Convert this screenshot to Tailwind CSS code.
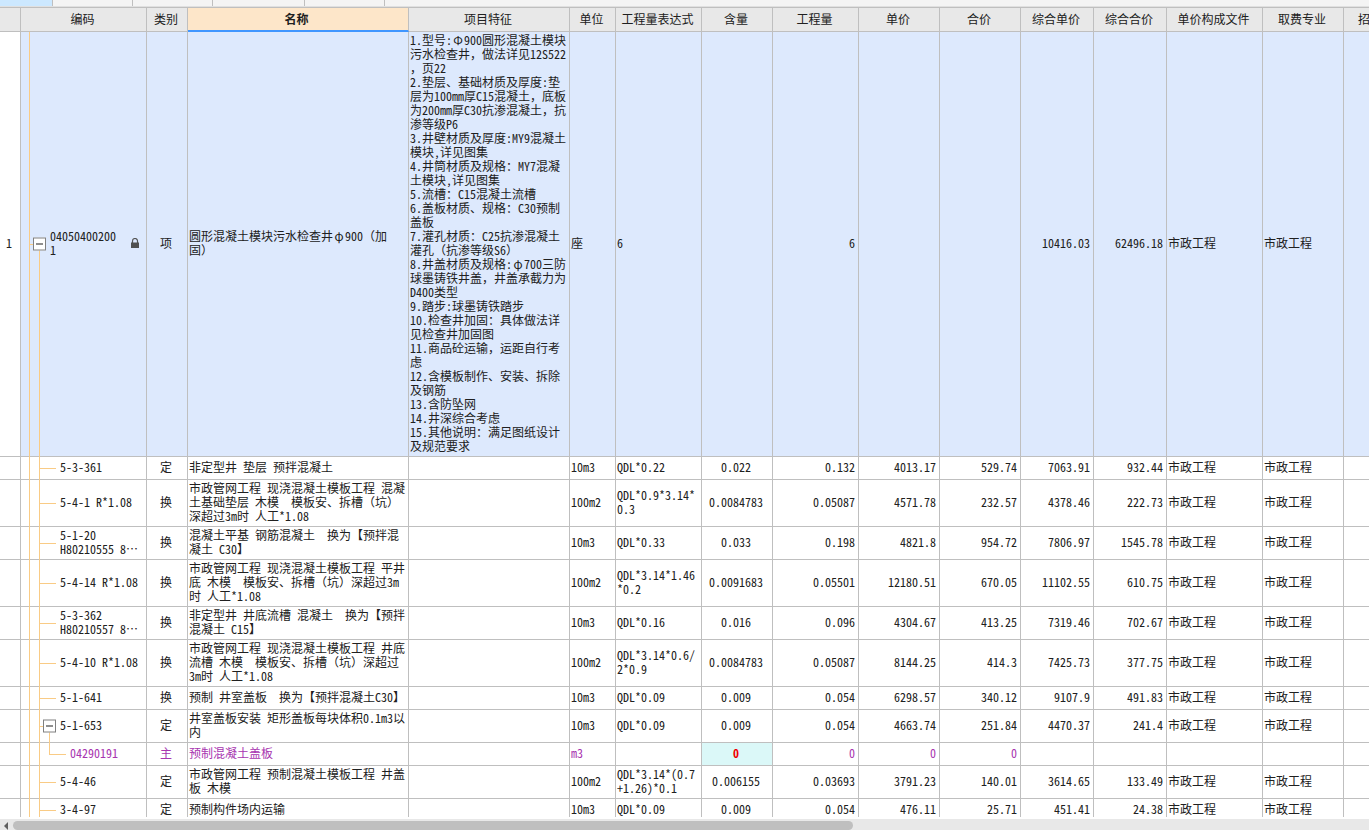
<!DOCTYPE html>
<html lang="zh-CN">
<head>
<meta charset="utf-8">
<title>分部分项工程量清单</title>
<script src="https://cdn.jsdelivr.net/npm/@tailwindcss/browser@4"></script>
</head>
<body class="flex h-screen flex-col overflow-hidden bg-white font-['Noto_Sans_Mono_CJK_SC','Noto_Sans_CJK_SC',sans-serif] text-[12px] leading-[14px] text-[#202020] [text-spacing-trim:space-all]">

<div class="flex h-[7px] shrink-0 border-b border-[#e0e0e0] bg-[#f4f4f4]">
  <div class="w-[53px] border-r border-[#bfbfbf] bg-[#cce8ff]"></div>
  <div class="w-20 border-r border-[#bfbfbf]"></div>
  <div class="w-20 border-r border-[#bfbfbf]"></div>
  <div class="w-[92px] border-r border-[#bfbfbf]"></div>
  <div class="w-20 border-r border-[#bfbfbf]"></div>
</div>

<main class="min-h-0 flex-1 overflow-hidden border-t border-[#bfbfbf]">
<table class="w-full table-fixed border-separate border-spacing-0 whitespace-pre [&_td]:border-r [&_td]:border-b [&_td]:border-[#bfbfbf] [&_td]:pt-0 [&_td]:pr-[3px] [&_td]:pb-[2px] [&_td]:pl-px [&_th]:overflow-hidden [&_th]:border-r [&_th]:border-b [&_th]:border-[#bfbfbf] [&_th]:bg-[#e8e8e8] [&_th]:pr-[2px] [&_th]:pb-[2px] [&_th]:font-normal [&_td:nth-child(1)]:text-center [&_td:nth-child(3)]:text-center [&_td:nth-child(8)]:text-center [&_td:nth-child(9)]:text-right [&_td:nth-child(10)]:text-right [&_td:nth-child(11)]:text-right [&_td:nth-child(12)]:text-right [&_td:nth-child(13)]:text-right">
<colgroup>
<col class="w-[21px]"><col class="w-[126px]"><col class="w-[41px]"><col class="w-[221px]"><col class="w-[161px]"><col class="w-[46px]"><col class="w-[86px]"><col class="w-[71px]"><col class="w-[86px]"><col class="w-[81px]"><col class="w-[81px]"><col class="w-[73px]"><col class="w-[73px]"><col class="w-[96px]"><col class="w-[81px]"><col>
</colgroup>
<thead>
<tr class="h-6"><th></th><th>编码</th><th>类别</th><th class="border-b-2! border-b-[#4096ff]! bg-[#fde6c9]! pr-[3px]! pb-0! font-bold!">名称</th><th>项目特征</th><th>单位</th><th>工程量表达式</th><th>含量</th><th>工程量</th><th>单价</th><th>合价</th><th>综合单价</th><th>综合合价</th><th>单价构成文件</th><th>取费专业</th><th class="border-r-0! pr-0! pl-[14px] text-left">招</th></tr>
</thead>
<tbody class="[&_td:last-child]:border-r-0">
<tr class="h-[425px] bg-[#dde9fd] [&>td:first-child]:bg-white">
<td>1</td>
<td class="relative pl-[29px]!"><span class="absolute inset-y-0 left-2 -bottom-px w-px bg-[#f9cb85]"></span><span class="absolute top-1/2 left-2 h-px w-1 bg-[#f9cb85]"></span><span class="absolute top-1/2 left-[18px] -bottom-px w-px bg-[#f9cb85]"></span><button aria-label="折叠" class="absolute top-1/2 left-3 flex size-[13px] -translate-y-1/2 items-center justify-center border border-[#808080] bg-white"><span class="h-px w-[7px] bg-[#202020]"></span></button><div class="flex items-center justify-between pr-1"><span>04050400200<br>1</span><svg class="h-[10px] w-2" viewBox="0 0 8 10" role="img" aria-label="锁定"><path d="M1.5 5V3a2.5 2.5 0 0 1 5 0v2" fill="none" stroke="#555" stroke-width="1.2"/><path d="M0 4.5h8V10H0z" fill="#505050"/></svg></div></td>
<td>项</td><td>圆形混凝土模块污水检查井<span class="inline-block w-3 text-center">φ</span>900（加<br>固）</td>
<td>1.型号:<span class="inline-block w-3 text-center">Φ</span>900圆形混凝土模块<br>污水检查井，做法详见12S522<br>，页22<br>2.垫层、基础材质及厚度:垫<br>层为100mm厚C15混凝土，底板<br>为200mm厚C30抗渗混凝土，抗<br>渗等级P6<br>3.井壁材质及厚度:MY9混凝土<br>模块,详见图集<br>4.井筒材质及规格：MY7混凝<br>土模块,详见图集<br>5.流槽：C15混凝土流槽<br>6.盖板材质、规格：C30预制<br>盖板<br>7.灌孔材质：C25抗渗混凝土<br>灌孔（抗渗等级S6）<br>8.井盖材质及规格:<span class="inline-block w-3 text-center">φ</span>700三防<br>球墨铸铁井盖，井盖承截力为<br>D400类型<br>9.踏步:球墨铸铁踏步<br>10.检查井加固：具体做法详<br>见检查井加固图<br>11.商品砼运输，运距自行考<br>虑<br>12.含模板制作、安装、拆除<br>及钢筋<br>13.含防坠网<br>14.井深综合考虑<br>15.其他说明：满足图纸设计<br>及规范要求</td>
<td>座</td><td>6</td><td></td><td>6</td><td></td><td></td><td>10416.03</td><td>62496.18</td><td>市政工程</td><td>市政工程</td><td></td></tr>

<tr class="h-[23px]"><td></td><td class="relative pl-[39px]!"><span class="absolute inset-y-0 left-2 -bottom-px w-px bg-[#f9cb85]"></span><span class="absolute inset-y-0 left-[18px] -bottom-px w-px bg-[#f9cb85]"></span><span class="absolute top-1/2 left-[18px] h-px w-[17px] bg-[#f9cb85]"></span>5-3-361</td><td>定</td><td>非定型井 垫层 预拌混凝土</td><td></td><td>10m3</td><td>QDL*0.22</td><td>0.022</td><td>0.132</td><td>4013.17</td><td>529.74</td><td>7063.91</td><td>932.44</td><td>市政工程</td><td>市政工程</td><td></td></tr>

<tr class="h-[47px]"><td></td><td class="relative pl-[39px]!"><span class="absolute inset-y-0 left-2 -bottom-px w-px bg-[#f9cb85]"></span><span class="absolute inset-y-0 left-[18px] -bottom-px w-px bg-[#f9cb85]"></span><span class="absolute top-1/2 left-[18px] h-px w-[17px] bg-[#f9cb85]"></span>5-4-1 R*1.08</td><td>换</td><td>市政管网工程 现浇混凝土模板工程 混凝<br>土基础垫层 木模  模板安、拆槽（坑）<br>深超过3m时 人工*1.08</td><td></td><td>100m2</td><td>QDL*0.9*3.14*<br>0.3</td><td>0.0084783</td><td>0.05087</td><td>4571.78</td><td>232.57</td><td>4378.46</td><td>222.73</td><td>市政工程</td><td>市政工程</td><td></td></tr>

<tr class="h-[33px]"><td></td><td class="relative pl-[39px]!"><span class="absolute inset-y-0 left-2 -bottom-px w-px bg-[#f9cb85]"></span><span class="absolute inset-y-0 left-[18px] -bottom-px w-px bg-[#f9cb85]"></span><span class="absolute top-1/2 left-[18px] h-px w-[17px] bg-[#f9cb85]"></span>5-1-20<br>H80210555 8…</td><td>换</td><td>混凝土平基 钢筋混凝土  换为【预拌混<br>凝土 C30】</td><td></td><td>10m3</td><td>QDL*0.33</td><td>0.033</td><td>0.198</td><td>4821.8</td><td>954.72</td><td>7806.97</td><td>1545.78</td><td>市政工程</td><td>市政工程</td><td></td></tr>

<tr class="h-[47px]"><td></td><td class="relative pl-[39px]!"><span class="absolute inset-y-0 left-2 -bottom-px w-px bg-[#f9cb85]"></span><span class="absolute inset-y-0 left-[18px] -bottom-px w-px bg-[#f9cb85]"></span><span class="absolute top-1/2 left-[18px] h-px w-[17px] bg-[#f9cb85]"></span>5-4-14 R*1.08</td><td>换</td><td>市政管网工程 现浇混凝土模板工程 平井<br>底 木模  模板安、拆槽（坑）深超过3m<br>时 人工*1.08</td><td></td><td>100m2</td><td>QDL*3.14*1.46<br>*0.2</td><td>0.0091683</td><td>0.05501</td><td>12180.51</td><td>670.05</td><td>11102.55</td><td>610.75</td><td>市政工程</td><td>市政工程</td><td></td></tr>

<tr class="h-[33px]"><td></td><td class="relative pl-[39px]!"><span class="absolute inset-y-0 left-2 -bottom-px w-px bg-[#f9cb85]"></span><span class="absolute inset-y-0 left-[18px] -bottom-px w-px bg-[#f9cb85]"></span><span class="absolute top-1/2 left-[18px] h-px w-[17px] bg-[#f9cb85]"></span>5-3-362<br>H80210557 8…</td><td>换</td><td>非定型井 井底流槽 混凝土  换为【预拌<br>混凝土 C15】</td><td></td><td>10m3</td><td>QDL*0.16</td><td>0.016</td><td>0.096</td><td>4304.67</td><td>413.25</td><td>7319.46</td><td>702.67</td><td>市政工程</td><td>市政工程</td><td></td></tr>

<tr class="h-[47px]"><td></td><td class="relative pl-[39px]!"><span class="absolute inset-y-0 left-2 -bottom-px w-px bg-[#f9cb85]"></span><span class="absolute inset-y-0 left-[18px] -bottom-px w-px bg-[#f9cb85]"></span><span class="absolute top-1/2 left-[18px] h-px w-[17px] bg-[#f9cb85]"></span>5-4-10 R*1.08</td><td>换</td><td>市政管网工程 现浇混凝土模板工程 井底<br>流槽 木模  模板安、拆槽（坑）深超过<br>3m时 人工*1.08</td><td></td><td>100m2</td><td>QDL*3.14*0.6/<br>2*0.9</td><td>0.0084783</td><td>0.05087</td><td>8144.25</td><td>414.3</td><td>7425.73</td><td>377.75</td><td>市政工程</td><td>市政工程</td><td></td></tr>

<tr class="h-[23px]"><td></td><td class="relative pl-[39px]!"><span class="absolute inset-y-0 left-2 -bottom-px w-px bg-[#f9cb85]"></span><span class="absolute inset-y-0 left-[18px] -bottom-px w-px bg-[#f9cb85]"></span><span class="absolute top-1/2 left-[18px] h-px w-[17px] bg-[#f9cb85]"></span>5-1-641</td><td>换</td><td>预制 井室盖板  换为【预拌混凝土C30】</td><td></td><td>10m3</td><td>QDL*0.09</td><td>0.009</td><td>0.054</td><td>6298.57</td><td>340.12</td><td>9107.9</td><td>491.83</td><td>市政工程</td><td>市政工程</td><td></td></tr>

<tr class="h-[33px]"><td></td><td class="relative pl-[39px]!"><span class="absolute inset-y-0 left-2 -bottom-px w-px bg-[#f9cb85]"></span><span class="absolute inset-y-0 left-[18px] -bottom-px w-px bg-[#f9cb85]"></span><span class="absolute top-1/2 left-[18px] h-px w-1 bg-[#f9cb85]"></span><span class="absolute top-1/2 left-7 -bottom-px w-px bg-[#f9cb85]"></span><button aria-label="折叠" class="absolute top-1/2 left-[22px] flex size-[13px] -translate-y-1/2 items-center justify-center border border-[#808080] bg-white"><span class="h-px w-[7px] bg-[#202020]"></span></button>5-1-653</td><td>定</td><td>井室盖板安装 矩形盖板每块体积0.1m3以<br>内</td><td></td><td>10m3</td><td>QDL*0.09</td><td>0.009</td><td>0.054</td><td>4663.74</td><td>251.84</td><td>4470.37</td><td>241.4</td><td>市政工程</td><td>市政工程</td><td></td></tr>

<tr class="h-[23px] text-[#a835b0]"><td></td><td class="relative pl-[49px]!"><span class="absolute inset-y-0 left-2 -bottom-px w-px bg-[#f9cb85]"></span><span class="absolute inset-y-0 left-[18px] -bottom-px w-px bg-[#f9cb85]"></span><span class="absolute top-0 bottom-1/2 left-7 w-px bg-[#f9cb85]"></span><span class="absolute top-1/2 left-7 h-px w-[17px] bg-[#f9cb85]"></span>04290191</td><td>主</td><td>预制混凝土盖板</td><td></td><td>m3</td><td></td><td class="bg-[#dbf8f8] font-bold text-[#f00000]">0</td><td>0</td><td>0</td><td>0</td><td></td><td></td><td></td><td></td><td></td></tr>

<tr class="h-[33px]"><td></td><td class="relative pl-[39px]!"><span class="absolute inset-y-0 left-2 -bottom-px w-px bg-[#f9cb85]"></span><span class="absolute inset-y-0 left-[18px] -bottom-px w-px bg-[#f9cb85]"></span><span class="absolute top-1/2 left-[18px] h-px w-[17px] bg-[#f9cb85]"></span>5-4-46</td><td>定</td><td>市政管网工程 预制混凝土模板工程 井盖<br>板 木模</td><td></td><td>100m2</td><td>QDL*3.14*(0.7<br>+1.26)*0.1</td><td>0.006155</td><td>0.03693</td><td>3791.23</td><td>140.01</td><td>3614.65</td><td>133.49</td><td>市政工程</td><td>市政工程</td><td></td></tr>

<tr class="h-[23px]"><td></td><td class="relative pl-[39px]!"><span class="absolute inset-y-0 left-2 -bottom-px w-px bg-[#f9cb85]"></span><span class="absolute inset-y-0 left-[18px] -bottom-px w-px bg-[#f9cb85]"></span><span class="absolute top-1/2 left-[18px] h-px w-[17px] bg-[#f9cb85]"></span>3-4-97</td><td>定</td><td>预制构件场内运输</td><td></td><td>10m3</td><td>QDL*0.09</td><td>0.009</td><td>0.054</td><td>476.11</td><td>25.71</td><td>451.41</td><td>24.38</td><td>市政工程</td><td>市政工程</td><td></td></tr>
</tbody>
</table>
</main>

<div class="mt-[2px] flex h-[11px] shrink-0 items-end bg-[#e8e8e8]">
  <button aria-label="向左滚动" class="flex h-[9px] w-[13px] items-center pl-1"><svg class="h-[8px] w-1" viewBox="0 0 4 8"><path d="M4 0v8L0 4z" fill="#606060"/></svg></button>
  <div class="h-[9px] w-[840px] rounded-[5px] bg-[#bfbfbf]"></div>
</div>
</body>
</html>
